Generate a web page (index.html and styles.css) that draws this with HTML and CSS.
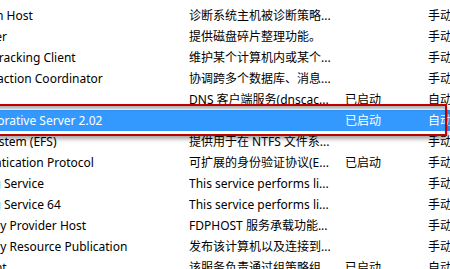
FILE: index.html
```html
<!DOCTYPE html>
<html lang="zh-CN">
<head>
<meta charset="utf-8">
<title>服务</title>
<link rel="stylesheet" href="styles.css">
</head>
<body>
<div class="view">
  <div class="list">
    <div class="row"><span class="c-name">Diagnostic Service Host</span><span class="c-desc">诊断服务主机被诊断策略...</span><span class="c-stat"></span><span class="c-start">手动</span></div>
    <div class="row"><span class="c-name">Diagnostic System Host</span><span class="c-desc">诊断系统主机被诊断策略...</span><span class="c-stat"></span><span class="c-start">手动</span></div>
    <div class="row"><span class="c-name">Disk Defragmenter</span><span class="c-desc">提供磁盘碎片整理功能。</span><span class="c-stat"></span><span class="c-start">手动</span></div>
    <div class="row"><span class="c-name">Distributed Link Tracking Client</span><span class="c-desc">维护某个计算机内或某个...</span><span class="c-stat"></span><span class="c-start">手动</span></div>
    <div class="row"><span class="c-name">Distributed Transaction Coordinator</span><span class="c-desc">协调跨多个数据库、消息...</span><span class="c-stat"></span><span class="c-start">手动</span></div>
    <div class="row"><span class="c-name">DNS Client</span><span class="c-desc">DNS 客户端服务(dnscac...</span><span class="c-stat">已启动</span><span class="c-start">自动</span></div>
    <div class="row selected"><span class="c-name">Document Collaborative Server 2.02</span><span class="c-desc"></span><span class="c-stat">已启动</span><span class="c-start">自动</span></div>
    <div class="row"><span class="c-name">Encrypting File System (EFS)</span><span class="c-desc">提供用于在 NTFS 文件系...</span><span class="c-stat"></span><span class="c-start">手动</span></div>
    <div class="row"><span class="c-name">Extensible Authentication Protocol</span><span class="c-desc">可扩展的身份验证协议(E...</span><span class="c-stat">已启动</span><span class="c-start">手动</span></div>
    <div class="row"><span class="c-name">FLEXnet Licensing Service</span><span class="c-desc">This service performs li...</span><span class="c-stat"></span><span class="c-start">手动</span></div>
    <div class="row"><span class="c-name">FLEXnet Licensing Service 64</span><span class="c-desc">This service performs li...</span><span class="c-stat"></span><span class="c-start">手动</span></div>
    <div class="row"><span class="c-name">Function Discovery Provider Host</span><span class="c-desc">FDPHOST 服务承载功能...</span><span class="c-stat"></span><span class="c-start">手动</span></div>
    <div class="row"><span class="c-name">Function Discovery Resource Publication</span><span class="c-desc">发布该计算机以及连接到...</span><span class="c-stat"></span><span class="c-start">手动</span></div>
    <div class="row"><span class="c-name">Group Policy Client</span><span class="c-desc">该服务负责通过组策略组...</span><span class="c-stat">已启动</span><span class="c-start">自动</span></div>
  </div>
  <div class="mark"></div>
</div>
</body>
</html>
```

FILE: styles.css
```css
html, body {
  margin: 0;
  padding: 0;
  background: #ffffff;
  overflow: hidden;
}
body {
  width: 450px;
  height: 269px;
  font-family: "Noto Sans", "Noto Sans CJK SC", sans-serif;
  font-size: 12px;
  color: #000000;
}
.view {
  position: relative;
  width: 450px;
  height: 269px;
  overflow: hidden;
}
.list {
  margin-top: -16px;
  margin-left: -100px;
  display: flex;
  flex-direction: column;
}
.row {
  display: grid;
  grid-template-columns: 289px 156px 83px 60px;
  height: 21px;
  align-items: center;
  white-space: nowrap;
}
.row > span {
  overflow: hidden;
  line-height: 21px;
}
.row.selected {
  background: #3399ff;
  color: #ffffff;
}
.mark {
  position: absolute;
  top: 104px;
  left: -10px;
  right: 3px;
  height: 28px;
  border: 2px solid #c00000;
  box-shadow: 1px 3px 4px rgba(0, 0, 0, 0.35), inset 1px 3px 3px rgba(0, 0, 0, 0.3);
}
```
